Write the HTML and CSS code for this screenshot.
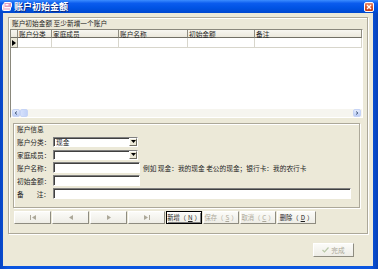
FILE: index.html
```html
<!DOCTYPE html>
<html>
<head>
<meta charset="utf-8">
<link rel="stylesheet" href="styles.css">
</head>
<body>
<div class="window">
  <div class="titlebar">
    <svg class="app-icon" viewBox="0 0 10 9" width="10" height="9">
      <rect x="0.5" y="2.5" width="8" height="6" rx="1" fill="#f2c9dc" stroke="#ffffff"/>
      <rect x="2" y="0.5" width="7.5" height="5" rx="1" fill="#e59bbd" stroke="#ffffff"/>
      <rect x="3.5" y="2" width="3" height="1.5" fill="#ffffff"/>
    </svg>
    <span class="title">账户初始金额</span>
    <div class="close">
      <svg viewBox="0 0 8 8" width="8" height="8"><path d="M2 2 L6 6 M6 2 L2 6" stroke="#fff" stroke-width="1.4"/></svg>
    </div>
  </div>
  <div class="client">
    <div class="panel">
      <div class="caption">账户初始金额 至少新增一个账户</div>
      <div class="grid">
        <div class="grid-head">
          <div class="hc ind"></div>
          <div class="hc col1">账户分类</div>
          <div class="hc col2">家庭成员</div>
          <div class="hc col3">账户名称</div>
          <div class="hc col4">初始金额</div>
          <div class="hc col5">备注</div>
        </div>
        <div class="grid-row">
          <div class="rc ind"><svg viewBox="0 0 4 6" width="4" height="6"><path d="M0 0 L4 3 L0 6 Z" fill="#000"/></svg></div>
          <div class="rc col1"></div>
          <div class="rc col2"></div>
          <div class="rc col3"></div>
          <div class="rc col4"></div>
          <div class="rc col5"></div>
        </div>
        <div class="grid-body"></div>
        <div class="hscroll">
          <div class="sb-btn"><svg viewBox="0 0 4 4" width="4" height="4"><path d="M3 0.5 L1 2 L3 3.5" stroke="#4d6185" fill="none"/></svg></div>
          <div class="sb-thumb"></div>
          <div class="sb-track"></div>
          <div class="sb-btn"><svg viewBox="0 0 4 4" width="4" height="4"><path d="M1 0.5 L3 2 L1 3.5" stroke="#4d6185" fill="none"/></svg></div>
        </div>
      </div>
      <div class="group">
        <div class="group-caption">账户信息</div>
        <div class="form">
          <div class="form-row">
            <span class="lbl">账户分类：</span>
            <div class="combo"><span class="val">现金</span><span class="drop"><svg viewBox="0 0 5 3" width="5" height="3"><path d="M0 0 H5 L2.5 3 Z" fill="#000"/></svg></span></div>
          </div>
          <div class="form-row">
            <span class="lbl">家庭成员：</span>
            <div class="combo"><span class="val"></span><span class="drop"><svg viewBox="0 0 5 3" width="5" height="3"><path d="M0 0 H5 L2.5 3 Z" fill="#000"/></svg></span></div>
          </div>
          <div class="form-row">
            <span class="lbl">账户名称：</span>
            <div class="text short"></div>
            <span class="hint">例如 现金：我的现金 老公的现金；银行卡：我的农行卡</span>
          </div>
          <div class="form-row">
            <span class="lbl">初始金额：</span>
            <div class="text short"></div>
          </div>
          <div class="form-row">
            <span class="lbl spread"><span>备</span><span>注：</span></span>
            <div class="text long"></div>
          </div>
        </div>
      </div>
      <div class="navbar">
        <div class="btn nav disabled"><svg viewBox="0 0 6 5" width="6" height="5"><path d="M0.5 0 V5" stroke="#aca899"/><path d="M6 0 L2 2.5 L6 5 Z" fill="#aca899"/></svg></div>
        <div class="btn nav disabled"><svg viewBox="0 0 4 5" width="4" height="5"><path d="M4 0 L0 2.5 L4 5 Z" fill="#aca899"/></svg></div>
        <div class="btn nav disabled"><svg viewBox="0 0 4 5" width="4" height="5"><path d="M0 0 L4 2.5 L0 5 Z" fill="#aca899"/></svg></div>
        <div class="btn nav disabled"><svg viewBox="0 0 6 5" width="6" height="5"><path d="M0 0 L4 2.5 L0 5 Z" fill="#aca899"/><path d="M5.5 0 V5" stroke="#aca899"/></svg></div>
        <div class="btn act default">新增（<u>N</u>）</div>
        <div class="btn act disabled">保存（<u>S</u>）</div>
        <div class="btn act disabled">取消（<u>C</u>）</div>
        <div class="btn act wide">删除（<u>D</u>）</div>
      </div>
    </div>
    <div class="footer">
      <div class="btn done disabled"><svg viewBox="0 0 7 6" width="7" height="6"><path d="M0.5 3 L2.5 5 L6.5 0.5" stroke="#b9c9a8" stroke-width="1.2" fill="none"/></svg><span>完成</span></div>
    </div>
  </div>
</div>
</body>
</html>
```
FILE: styles.css
```css
html, body {
  margin: 0;
  padding: 0;
}
body {
  width: 378px;
  height: 269px;
  overflow: hidden;
  font-family: "Noto Sans CJK SC", "Noto Sans", sans-serif;
  font-size: 6.7px;
  color: #1e1e1e;
  background: #0a4fd6;
}
.window {
  width: 378px;
  height: 269px;
  display: flex;
  flex-direction: column;
  background: linear-gradient(90deg, #0845c4, #0a55e0 2%, #0a55e0 98%, #0640b8);
}
.titlebar {
  height: 13px;
  flex: none;
  display: flex;
  align-items: center;
  padding: 0 4px 0 2px;
  background: linear-gradient(#3c8dff, #0b5cee 25%, #0053e4 60%, #0048cf);
}
.app-icon {
  flex: none;
}
.title {
  margin-left: 2px;
  color: #fff;
  font-weight: 700;
  font-size: 9px;
  line-height: 13px;
  text-shadow: 1px 1px 0 #0a2a80;
}
.close {
  margin-left: auto;
  width: 8px;
  height: 8px;
  border: 1px solid #fff;
  border-radius: 2px;
  background: linear-gradient(#ea8b6c, #d9562e 50%, #c23a12);
  display: flex;
  align-items: center;
  justify-content: center;
}
.client {
  flex: 1;
  margin: 0 5px 3px 3px;
  background: #ece9d8;
  display: flex;
  flex-direction: column;
}
.panel {
  margin: 4px 5px 0 5px;
  height: 217px;
  box-sizing: border-box;
  border: 1px solid #aca899;
  box-shadow: inset 1px 1px 0 #fff, 1px 1px 0 #fff;
  display: flex;
  flex-direction: column;
  flex: none;
}
.caption {
  height: 11px;
  line-height: 11px;
  padding-left: 3px;
}
.grid {
  margin-left: 1px;
  width: 353px;
  height: 89px;
  box-sizing: border-box;
  border: 1px solid;
  border-color: #8a887c #fff #fff #8a887c;
  background: #fff;
  display: flex;
  flex-direction: column;
  flex: none;
}
.grid-head, .grid-row {
  display: flex;
  flex: none;
}
.grid-head {
  height: 8px;
}
.grid-row {
  height: 10px;
}
.hc {
  box-sizing: border-box;
  height: 8px;
  line-height: 8px;
  padding-left: 1px;
  background: linear-gradient(#f7f6f0, #ebe8dc);
  border-right: 1px solid #8f8d82;
  border-bottom: 1px solid #716f64;
  white-space: nowrap;
}
.rc {
  box-sizing: border-box;
  height: 10px;
  background: #fff;
  border-right: 1px solid #d8d6cc;
  border-bottom: 1px solid #d8d6cc;
}
.rc.ind {
  background: #ece9d8;
  border-right: 1px solid #8f8d82;
  border-bottom: 1px solid #8f8d82;
  display: flex;
  align-items: center;
  padding-left: 1px;
}
.ind { width: 7px; }
.col1 { width: 34px; }
.col2 { width: 67px; }
.col3 { width: 69px; }
.col4 { width: 67px; }
.col5 { width: 107px; }
.grid-body {
  flex: 1;
  background: #fff;
}
.hscroll {
  height: 8px;
  flex: none;
  display: flex;
  background: #f6f5ef;
  padding: 0 1px;
}
.sb-btn {
  width: 8px;
  height: 8px;
  box-sizing: border-box;
  border: 1px solid #c6d4f6;
  border-radius: 2px;
  background: linear-gradient(#e3ebfd, #bccdf5);
  display: flex;
  align-items: center;
  justify-content: center;
}
.sb-thumb {
  width: 8px;
  height: 8px;
  box-sizing: border-box;
  border: 1px solid #c6d4f6;
  border-radius: 2px;
  background: linear-gradient(90deg, #d5e0fb, #c2d2f7);
}
.sb-track {
  flex: 1;
}
.group {
  margin: 5px 0 0 4px;
  width: 347px;
  height: 85px;
  box-sizing: border-box;
  border: 1px solid #aca899;
  box-shadow: inset 1px 1px 0 #fff, 1px 1px 0 #fff;
  flex: none;
}
.group-caption {
  margin-top: 1px;
  height: 8px;
  line-height: 8px;
  padding-left: 3px;
}
.form {
  padding-top: 3px;
  display: flex;
  flex-direction: column;
  gap: 2px;
}
.form-row {
  height: 11px;
  display: flex;
  align-items: center;
}
.lbl {
  width: 36px;
  margin-left: 3px;
  flex: none;
  white-space: nowrap;
}
.lbl.spread {
  width: 33px;
  margin-right: 3px;
  display: flex;
  justify-content: space-between;
}
.combo {
  width: 85px;
  height: 10px;
  box-sizing: border-box;
  border: 1px solid;
  border-color: #808080 #fff #fff #808080;
  box-shadow: inset 1px 1px 0 #404040;
  background: #fff;
  display: flex;
  align-items: center;
}
.val {
  padding-left: 2px;
  line-height: 8px;
}
.drop {
  margin-left: auto;
  width: 8px;
  height: 8px;
  box-sizing: border-box;
  border: 1px solid;
  border-color: #fff #6f6d62 #6f6d62 #fff;
  background: #ece9d8;
  display: flex;
  align-items: center;
  justify-content: center;
}
.text {
  height: 11px;
  box-sizing: border-box;
  border: 1px solid;
  border-color: #808080 #fff #fff #808080;
  box-shadow: inset 1px 1px 0 #404040;
  background: #fff;
}
.text.short {
  width: 87px;
}
.text.long {
  width: 298px;
}
.hint {
  margin-left: 3px;
  white-space: nowrap;
}
.navbar {
  margin-top: 3px;
  padding-left: 5px;
  height: 13px;
  display: flex;
  gap: 1px;
  flex: none;
}
.btn {
  box-sizing: border-box;
  height: 13px;
  display: flex;
  align-items: center;
  justify-content: center;
  background: linear-gradient(#fbfbf8, #eeede6);
  border: 1px solid;
  border-color: #fff #8e8c80 #8e8c80 #fff;
  white-space: nowrap;
  gap: 2px;
}
.btn.nav {
  width: 37px;
}
.btn.act {
  width: 36px;
  font-size: 6.3px;
}
.btn.act.wide {
  width: 39px;
}
.btn.default {
  border: 1px solid #000;
  box-shadow: inset 1px 1px 0 #fff, inset -1px -1px 0 #808080;
}
.btn.disabled {
  color: #aca899;
}
.btn u {
  text-underline-offset: 1px;
}
.footer {
  margin-top: 9px;
  padding-right: 19px;
  display: flex;
  justify-content: flex-end;
}
.btn.done {
  width: 41px;
  height: 14px;
}
```
